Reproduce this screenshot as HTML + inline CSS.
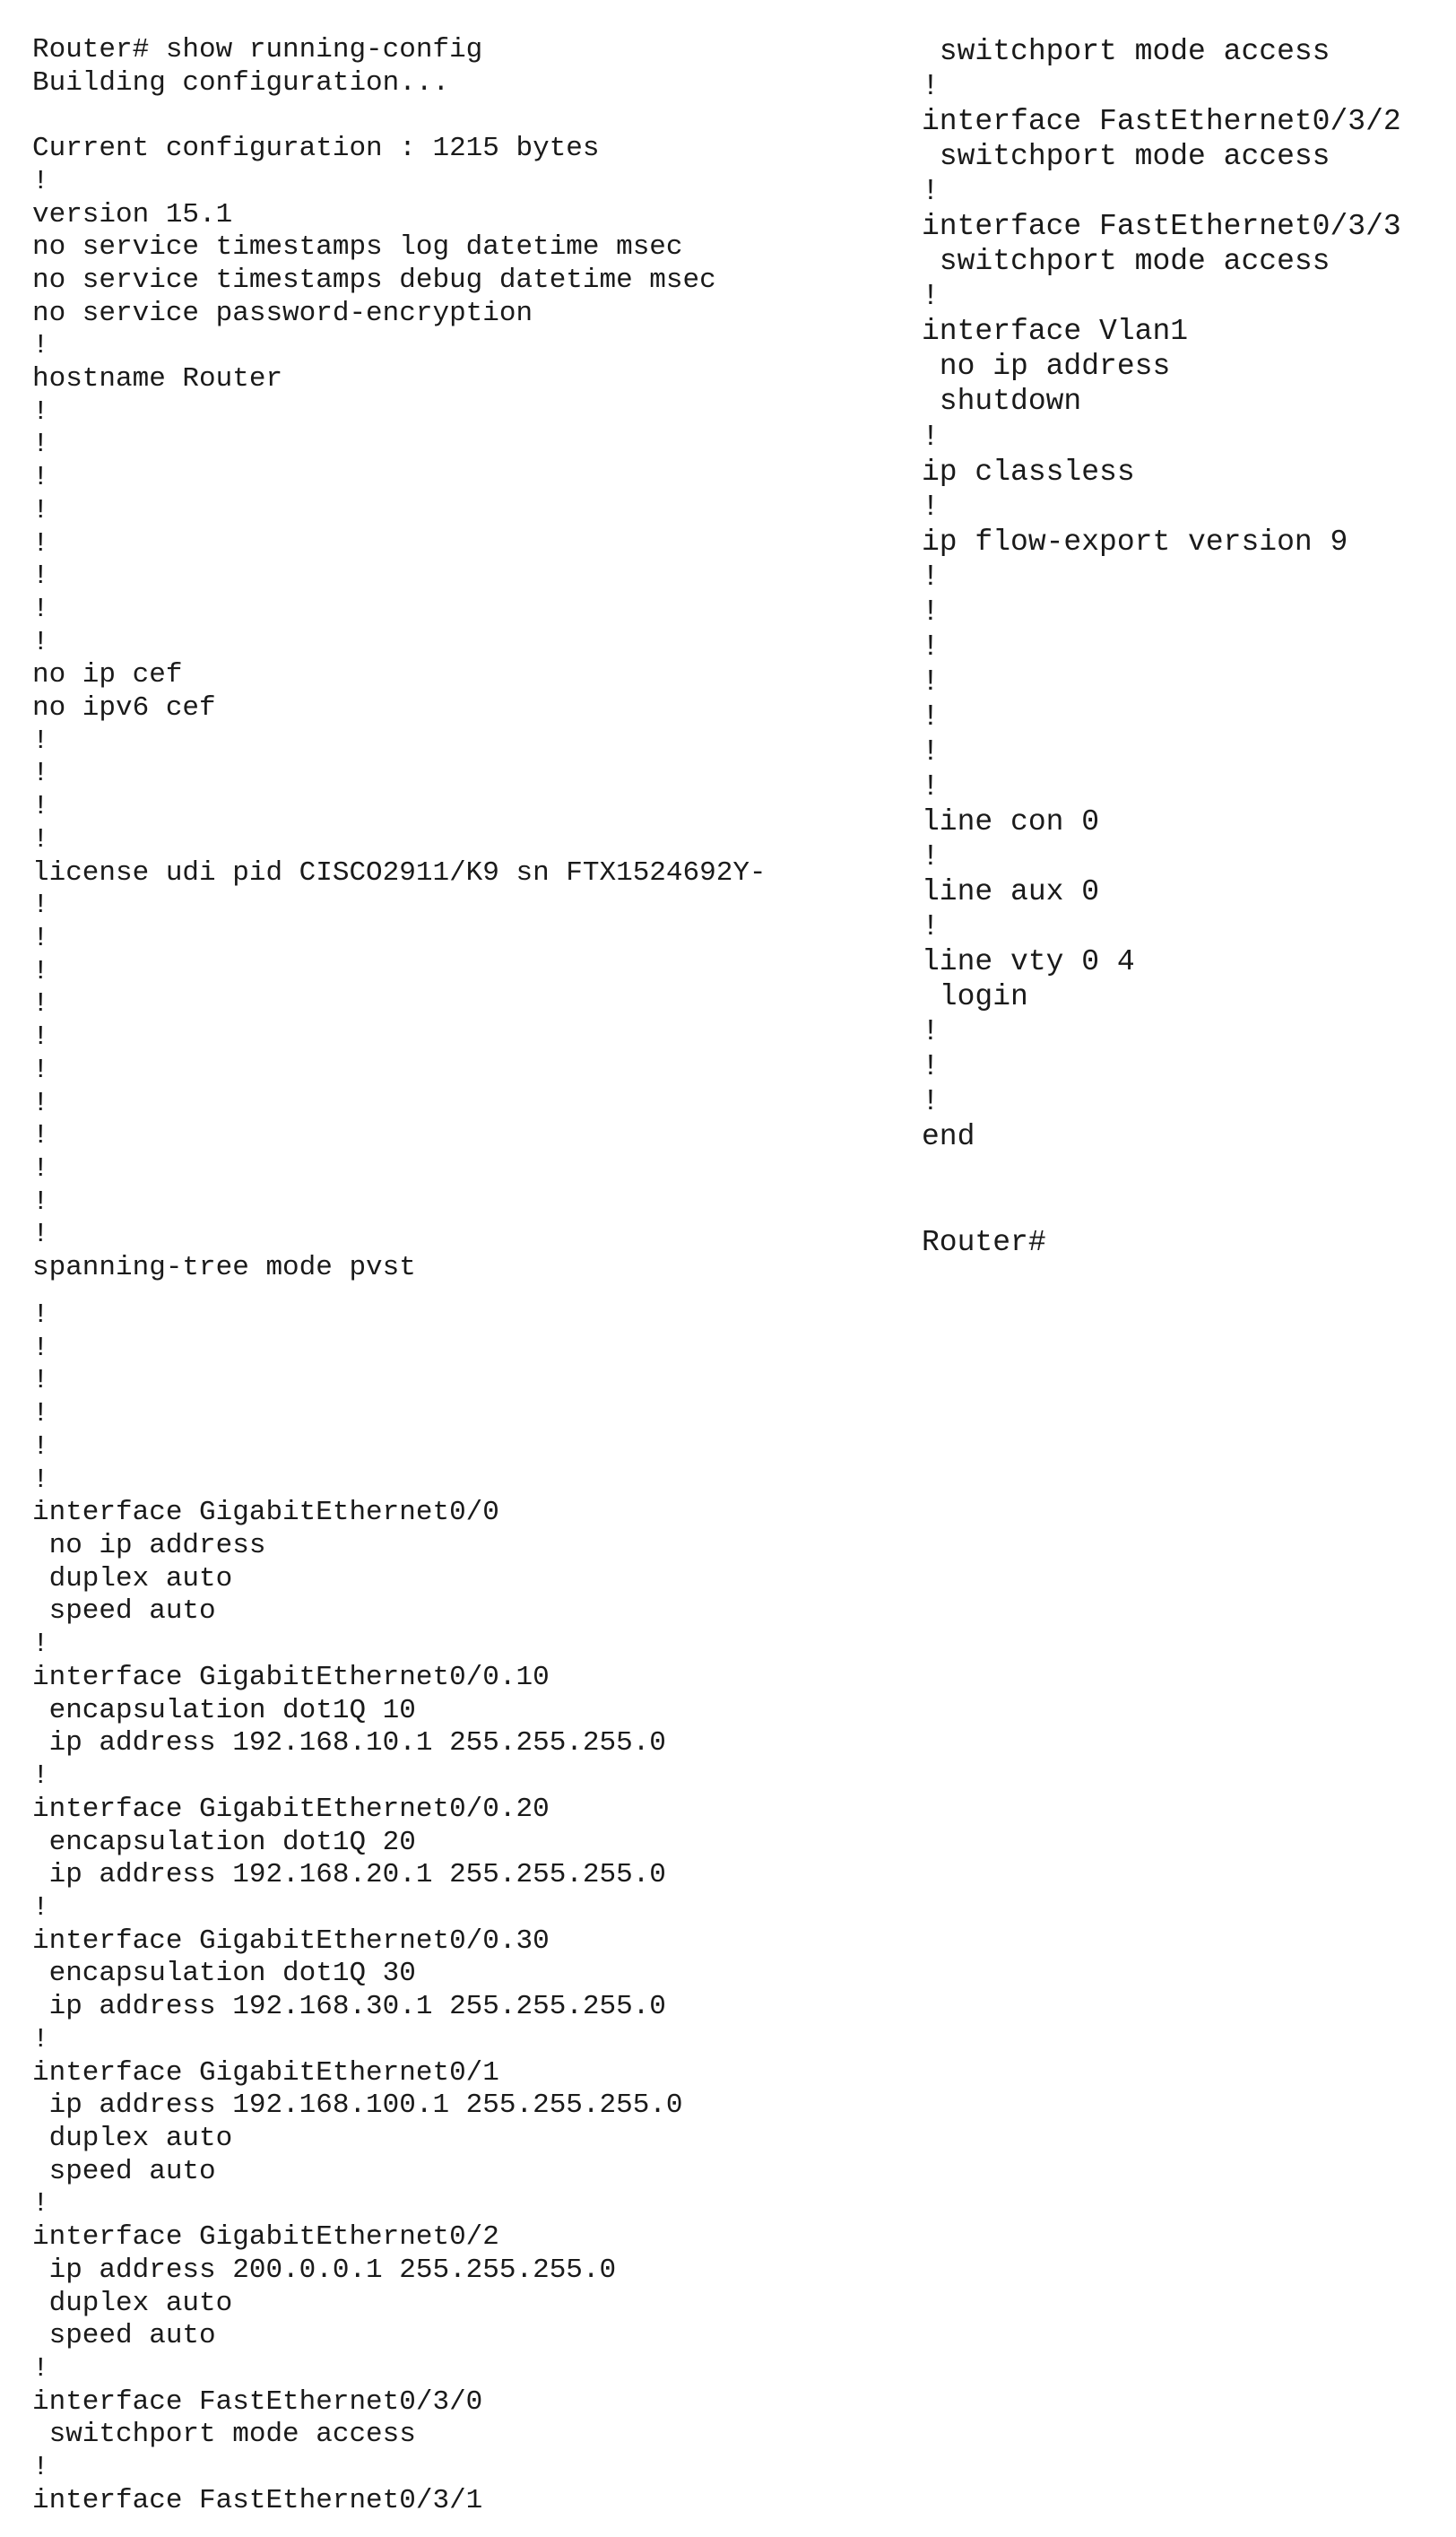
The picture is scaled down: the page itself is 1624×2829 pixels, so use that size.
<!DOCTYPE html>
<html><head><meta charset="utf-8"><style>
html,body{margin:0;padding:0;background:#fff;}
body{width:1624px;height:2829px;position:relative;overflow:hidden;}
pre{position:absolute;margin:0;font-family:"Liberation Mono","Courier New",monospace;color:#1a1a1a;white-space:pre;}
.l{left:36px;font-size:31px;line-height:36.7px;}
.r{left:1028px;font-size:33px;line-height:39.05px;}
</style></head><body>
<pre class="l" style="top:38px">Router# show running-config
Building configuration...

Current configuration : 1215 bytes
!
version 15.1
no service timestamps log datetime msec
no service timestamps debug datetime msec
no service password-encryption
!
hostname Router
!
!
!
!
!
!
!
!
no ip cef
no ipv6 cef
!
!
!
!
license udi pid CISCO2911/K9 sn FTX1524692Y-
!
!
!
!
!
!
!
!
!
!
!
spanning-tree mode pvst</pre>
<pre class="l" style="top:1449px;line-height:36.72px">!
!
!
!
!
!
interface GigabitEthernet0/0
 no ip address
 duplex auto
 speed auto
!
interface GigabitEthernet0/0.10
 encapsulation dot1Q 10
 ip address 192.168.10.1 255.255.255.0
!
interface GigabitEthernet0/0.20
 encapsulation dot1Q 20
 ip address 192.168.20.1 255.255.255.0
!
interface GigabitEthernet0/0.30
 encapsulation dot1Q 30
 ip address 192.168.30.1 255.255.255.0
!
interface GigabitEthernet0/1
 ip address 192.168.100.1 255.255.255.0
 duplex auto
 speed auto
!
interface GigabitEthernet0/2
 ip address 200.0.0.1 255.255.255.0
 duplex auto
 speed auto
!
interface FastEthernet0/3/0
 switchport mode access
!
interface FastEthernet0/3/1</pre>
<pre class="r" style="top:38px"> switchport mode access
!
interface FastEthernet0/3/2
 switchport mode access
!
interface FastEthernet0/3/3
 switchport mode access
!
interface Vlan1
 no ip address
 shutdown
!
ip classless
!
ip flow-export version 9
!
!
!
!
!
!
!
line con 0
!
line aux 0
!
line vty 0 4
 login
!
!
!
end


Router#</pre>
</body></html>
